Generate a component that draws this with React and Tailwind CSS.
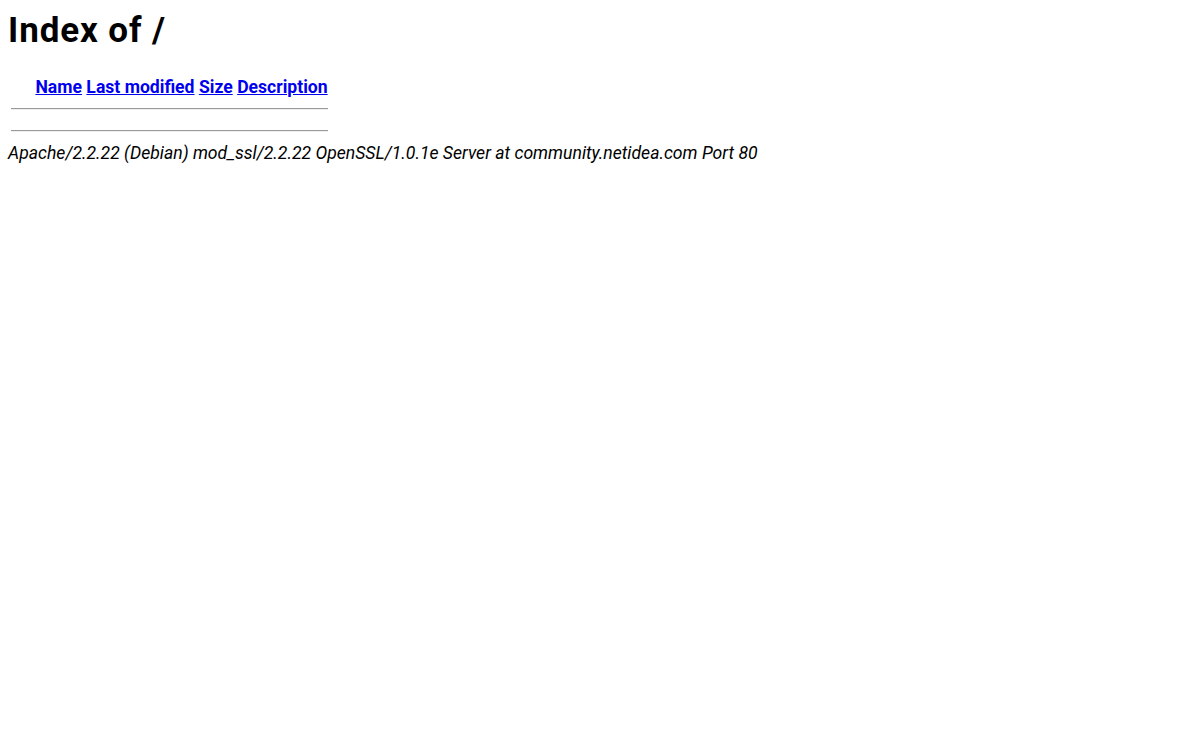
const footer = 'Apache/2.2.22 (Debian) mod_ssl/2.2.22 OpenSSL/1.0.1e Server at community.netidea.com Port 80'

const columns = ['Name', 'Last modified', 'Size', 'Description']

export default function App() {
  return (
    <div className="w-full h-[740px] bg-white text-black px-2 font-['Roboto',sans-serif]">
      <h1 className="pt-[13px] text-[35px] leading-[35px] font-bold tracking-[0.9px]">Index of /</h1>
      <div className="inline-flex flex-col mt-[28px] ml-[3px]">
        <div className="flex gap-[4.4px] text-[17.6px] leading-[22px] font-bold">
          {/* blank icon column */}
          <span className="w-[20px]" />
          {columns.map(h => (
            <a key={h} href="#" className="text-[#0000ee] underline">{h}</a>
          ))}
        </div>
        <div className="mt-[10px] border-t border-t-[#9a9a9a] border-b border-b-[#eeeeee]" />
        <div className="mt-[20px] border-t border-t-[#9a9a9a] border-b border-b-[#eeeeee]" />
      </div>
      <address className="mt-[10px] text-[17.6px] leading-[22px] italic">{footer}</address>
    </div>
  )
}
